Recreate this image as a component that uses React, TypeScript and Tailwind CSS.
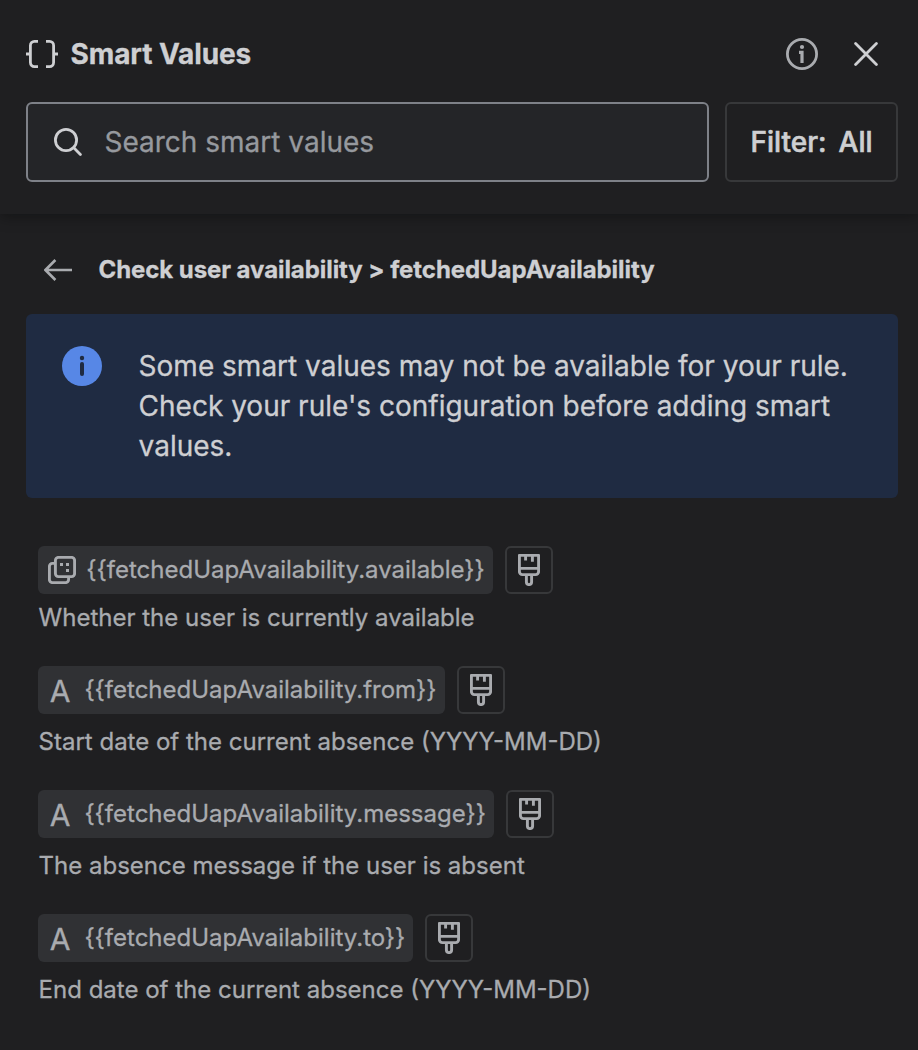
import { clsx } from 'clsx'

type ValueType = 'boolean' | 'text'

interface SmartValue {
  name: string
  type: ValueType
  description: string
}

const smartValues: SmartValue[] = [
  {
    name: 'fetchedUapAvailability.available',
    type: 'boolean',
    description: 'Whether the user is currently available',
  },
  {
    name: 'fetchedUapAvailability.from',
    type: 'text',
    description: 'Start date of the current absence (YYYY-MM-DD)',
  },
  {
    name: 'fetchedUapAvailability.message',
    type: 'text',
    description: 'The absence message if the user is absent',
  },
  {
    name: 'fetchedUapAvailability.to',
    type: 'text',
    description: 'End date of the current absence (YYYY-MM-DD)',
  },
]

function BracesIcon() {
  return (
    <svg width="32" height="28" viewBox="0 0 32 28" fill="none" stroke="currentColor" strokeWidth="2.8">
      <path d="M12 1.4H8.4A4 4 0 0 0 4.4 5.4v17.2a4 4 0 0 0 4 4H12M0 14h4.4" />
      <path d="M20 1.4h3.6a4 4 0 0 1 4 4v17.2a4 4 0 0 1-4 4H20M32 14h-4.4" />
    </svg>
  )
}

function InfoIcon() {
  return (
    <svg width="32" height="32" viewBox="0 0 32 32" fill="none" stroke="currentColor" strokeWidth="2.8">
      <circle cx="16" cy="16" r="14.6" />
      <path d="M13 14.4h3v10.6" strokeWidth="3.2" />
      <circle cx="16" cy="9" r="2.1" fill="currentColor" stroke="none" />
    </svg>
  )
}

function CloseIcon() {
  return (
    <svg width="24" height="24" viewBox="0 0 24 24" fill="none" stroke="currentColor" strokeWidth="2.8" strokeLinecap="round">
      <path d="M1.6 1.6l20.8 20.8M22.4 1.6L1.6 22.4" />
    </svg>
  )
}

function SearchIcon() {
  return (
    <svg width="28" height="28" viewBox="0 0 28 28" fill="none" stroke="currentColor" strokeWidth="2.8" strokeLinecap="round">
      <circle cx="12" cy="12" r="10.6" />
      <path d="M19.8 19.8l6.6 6.6" />
    </svg>
  )
}

function BackIcon() {
  return (
    <svg width="28" height="22" viewBox="0 0 28 22" fill="none" stroke="currentColor" strokeWidth="2.6">
      <path d="M28 11H1.6M11.4 1L1.4 11l10 10" />
    </svg>
  )
}

function BooleanIcon() {
  return (
    <svg width="28" height="28" viewBox="0 0 28 28" fill="none" stroke="currentColor" strokeWidth="2.9">
      <rect x="7.4" y="1.4" width="19.2" height="19.2" rx="3" />
      <path d="M7.4 7.4H4.4a3 3 0 0 0-3 3v13.2a3 3 0 0 0 3 3h13.2a3 3 0 0 0 3-3v-3" />
      <path d="M12 7h3v3h-3zM18 7h3v3h-3zM18 13h3v3h-3z" fill="currentColor" stroke="none" />
    </svg>
  )
}

function BrushIcon() {
  return (
    <svg width="22" height="32" viewBox="0 0 22 32" fill="none" stroke="currentColor" strokeWidth="2.9">
      <path d="M1.4 1.4h19.2v16.2a3 3 0 0 1-3 3H4.4a3 3 0 0 1-3-3zM1.4 14.4h19.2" strokeLinejoin="round" />
      <path d="M7.6 1.4v5M14.4 1.4v6.4" />
      <path d="M8.4 20.6v7.4a2.6 2.6 0 0 0 5.2 0v-7.4" />
    </svg>
  )
}

function Header() {
  return (
    <header className="relative h-[214px] bg-[#1f1f21] pt-[34px] pr-5 pl-[26px] shadow-[0_2px_14px_rgba(3,4,4,0.4)]">
      <div className="flex h-10 items-center">
        <BracesIcon />
        <h1 className="ml-[12.5px] text-[28px] leading-10 font-[653] tracking-[-0.1px]">Smart Values</h1>
        <button className="ml-auto text-[#a9abaf]" aria-label="About smart values">
          <InfoIcon />
        </button>
        <button className="mr-5 ml-9" aria-label="Close">
          <CloseIcon />
        </button>
      </div>
      <div className="mt-7 flex gap-4">
        <label className="flex h-20 w-[683px] items-center rounded-md border-2 border-[#7e8188] bg-[#242528] pl-[26px]">
          <SearchIcon />
          <input
            className="ml-[22.5px] flex-1 bg-transparent text-[28px] leading-10 outline-none placeholder:text-[#96999e]"
            placeholder="Search smart values"
          />
        </label>
        <button className="flex h-20 flex-1 items-center justify-center gap-3 rounded-md border-2 border-[#37383a] text-[28px] font-medium [-webkit-text-stroke:0.6px]">
          <span>Filter:</span>
          <span>All</span>
        </button>
      </div>
    </header>
  )
}

function SmartValueRow({ value }: { value: SmartValue }) {
  const isText = value.type === 'text'

  return (
    <li className={clsx('text-[24px] text-[#a9abaf]', isText ? 'h-[124px]' : 'h-[120px]')}>
      <div className="flex gap-3">
        <code className="flex h-12 items-center rounded-md bg-[#303134] pr-2 pl-2.5 font-[Inter,sans-serif]">
          {isText ? (
            <span className="w-6 pt-0.5 text-center text-[30px] leading-none">A</span>
          ) : (
            <BooleanIcon />
          )}
          <span className={isText ? 'ml-[12.4px]' : 'ml-[10.3px]'}>{`{{${value.name}}}`}</span>
        </code>
        <button
          className="flex size-12 items-center justify-center rounded-md border-2 border-[#37383a]"
          aria-label={`Insert ${value.name}`}
        >
          <BrushIcon />
        </button>
      </div>
      <p className={clsx('pl-[0.6px] leading-8', isText ? 'mt-3' : 'mt-2')}>{value.description}</p>
    </li>
  )
}

export default function App() {
  return (
    <div className="h-[1050px] w-[918px] overflow-hidden bg-[#1f1f21] font-[Inter,sans-serif] text-[#cecfd2] [-webkit-text-stroke:0.3px]">
      <Header />
      <main className="pr-5 pl-[26px]">
        <div className="flex h-[100px] items-center pt-3 pl-[18px]">
          <button className="text-[#a9abaf]" aria-label="Back">
            <BackIcon />
          </button>
          <h2 className="ml-[26.5px] text-[24px] font-[653] tracking-[-0.07px]">
            Check user availability &gt; fetchedUapAvailability
          </h2>
        </div>

        <div className="flex h-[184px] rounded-md bg-[#1f2b42] pt-8 pl-9">
          <svg className="shrink-0" width="40" height="40" viewBox="0 0 40 40">
            <circle cx="20" cy="20" r="20" fill="#5787e6" />
            <circle cx="20" cy="12" r="2.2" fill="#1f2b42" />
            <rect x="18" y="16" width="4" height="14" rx="2" fill="#1f2b42" />
          </svg>
          <p className="ml-[36.6px] w-[730px] text-[28px] leading-10">
            Some smart values may not be available for your rule. Check your rule's configuration before
            adding smart values.
          </p>
        </div>

        <ul className="mt-12 pl-3">
          {smartValues.map((value) => (
            <SmartValueRow key={value.name} value={value} />
          ))}
        </ul>
      </main>
    </div>
  )
}
